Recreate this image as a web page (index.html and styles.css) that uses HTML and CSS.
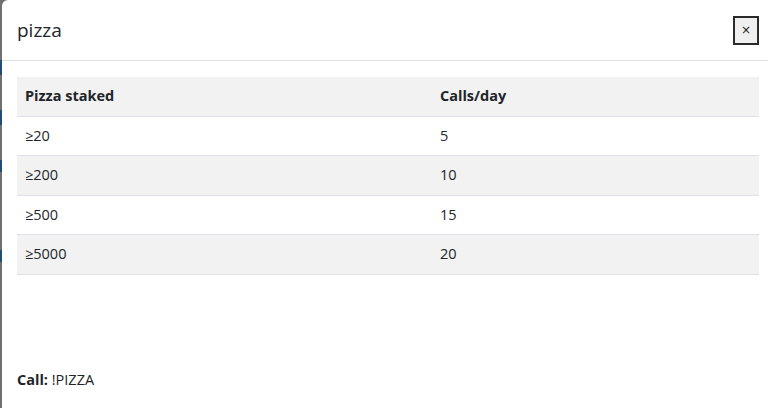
FILE: index.html
```html
<!DOCTYPE html>
<html>
<head>
<meta charset="utf-8">
<link rel="stylesheet" href="styles.css">
</head>
<body>
<div class="backdrop"></div>
<div class="modal">
  <div class="modal-header">
    <h5 class="modal-title">pizza</h5>
    <button class="close-btn" type="button">×</button>
  </div>
  <div class="modal-body">
    <table class="rates">
      <thead>
        <tr class="shaded"><th class="col-a">Pizza staked</th><th>Calls/day</th></tr>
      </thead>
      <tbody>
        <tr><td>≥20</td><td>5</td></tr>
        <tr class="shaded"><td>≥200</td><td>10</td></tr>
        <tr><td>≥500</td><td>15</td></tr>
        <tr class="shaded"><td>≥5000</td><td>20</td></tr>
      </tbody>
    </table>
    <p class="call"><b>Call:</b> !PIZZA</p>
  </div>
</div>
</body>
</html>
```
FILE: styles.css
```css
html, body {
  margin: 0;
  height: 408px;
  overflow: hidden;
}
body {
  display: flex;
  font-family: "Open Sans", "Noto Sans", sans-serif;
  font-size: 14.5px;
  color: #212529;
  background: #6f6f6f;
}
.backdrop {
  width: 2px;
  flex: none;
  background: linear-gradient(to bottom, #707070 0, #707070 60px, #1d4f7d 60px, #1d4f7d 75px, #707070 75px, #707070 110px, #1d4f7d 110px, #1d4f7d 125px, #707070 125px, #707070 160px, #1d4f7d 160px, #1d4f7d 172px, #707070 172px, #707070 250px, #1d4f7d 250px, #1d4f7d 262px, #707070 262px);
}
.modal {
  flex: 1;
  background: #fff;
  border-top-left-radius: 6px;
  display: flex;
  flex-direction: column;
}
.modal-header {
  display: flex;
  justify-content: space-between;
  align-items: center;
  padding: 15px 9px 15px 15px;
  border-bottom: 1px solid #dee2e6;
}
.modal-title {
  margin: 0;
  font-size: 19px;
  font-weight: 400;
  line-height: 30px;
}
.close-btn {
  width: 26px;
  height: 29px;
  padding: 0;
  border: 2px solid #2b2b2b;
  background: #efefef;
  color: #222;
  font-family: "DejaVu Sans", sans-serif;
  font-size: 12px;
  line-height: 1;
}
.modal-body {
  padding: 16px 9px 0 15px;
}
.rates {
  width: 100%;
  border-collapse: collapse;
}
.rates th, .rates td {
  text-align: left;
  padding: 8px 8px;
  line-height: 22.5px;
  border-bottom: 1px solid #dee2e6;
}
.rates th {
  font-weight: 700;
}
.col-a {
  width: 399px;
}
.shaded {
  background: #f2f2f2;
}
.call {
  margin: 94px 0 0;
  line-height: 22px;
}
```
